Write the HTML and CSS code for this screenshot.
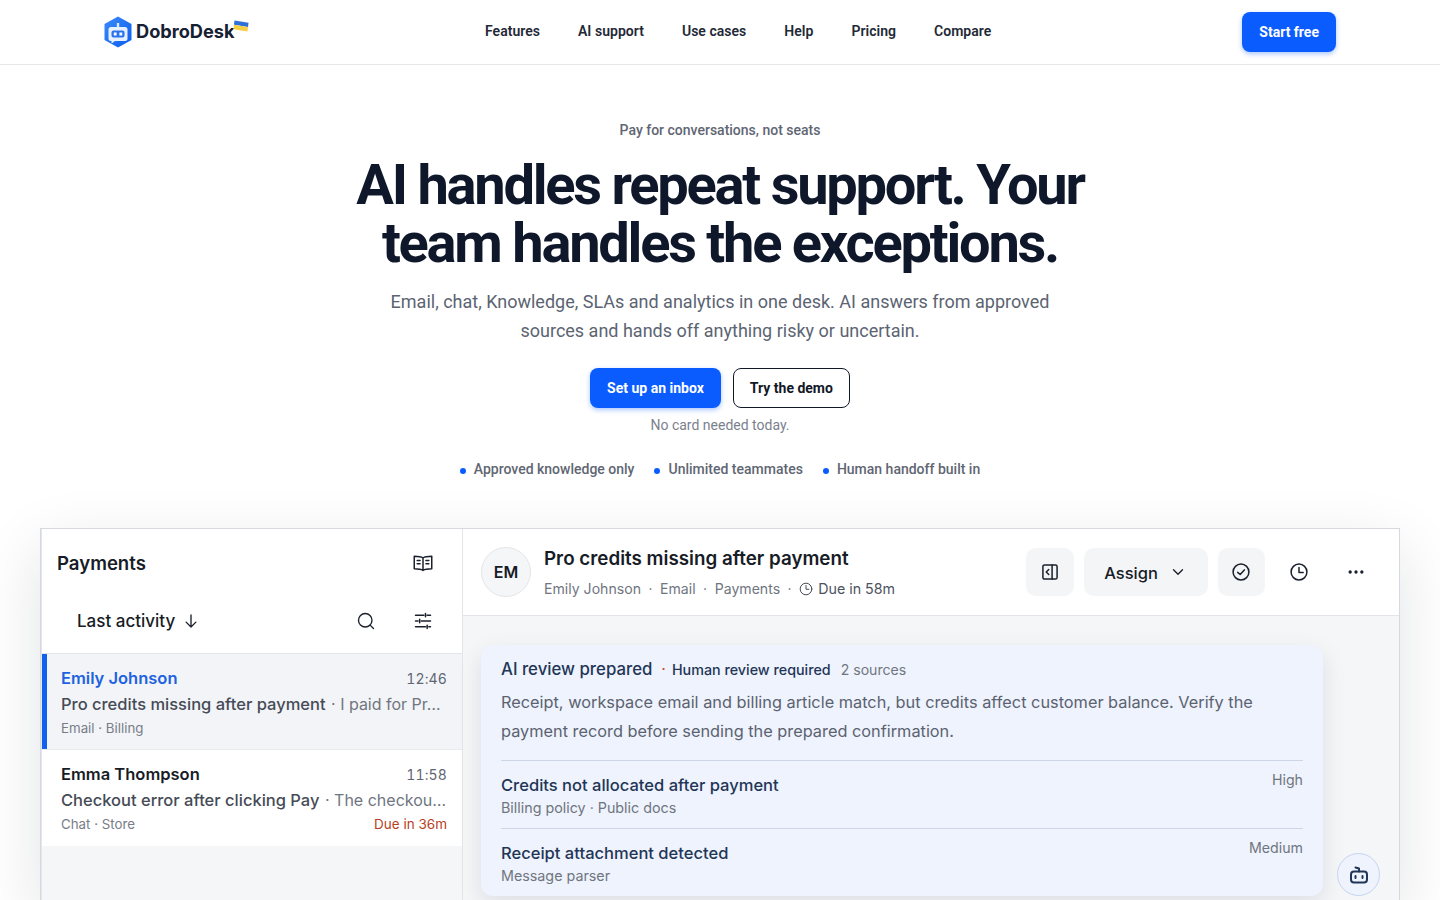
FILE: index.html
```html
<!DOCTYPE html>
<html lang="en">
<head>
  <meta charset="UTF-8" />
  <meta name="viewport" content="width=device-width, initial-scale=1.0"/>
  <title>DobroDesk</title>
  <link rel="stylesheet" href="styles.css">
</head>
<body>
  <header class="topbar">
    <div class="topbar-inner">
      <a class="logo" href="#">
        <svg class="logo-mark" width="28" height="32" viewBox="1 0 28 32">
          <defs>
            <linearGradient id="hex" x1="0" y1="0" x2="1" y2="1">
              <stop offset="0" stop-color="#3b8bf8"/>
              <stop offset="1" stop-color="#0b5cf0"/>
            </linearGradient>
          </defs>
          <path d="M15 0.5 L28.5 8 V24 L15 31.5 L1.5 24 V8 Z" fill="url(#hex)"/>
          <rect x="13.800" y="7" width="2.400" height="4.500" fill="#dbe8ff"/>
          <path d="M8 11 H22 A2.500 2.500 0 0 1 24.500 13.500 V22.500 A2.500 2.500 0 0 1 22 25 H12 L8.500 27.500 V25 H8 A2.500 2.500 0 0 1 5.500 22.500 V13.500 A2.500 2.500 0 0 1 8 11 Z" fill="#e6f0ff"/>
          <rect x="8.500" y="14.500" width="13" height="7" rx="2" fill="#2a74ee"/>
          <rect x="10.800" y="16.500" width="2.800" height="3" fill="#fff"/>
          <rect x="16.400" y="16.500" width="2.800" height="3" fill="#fff"/>
        </svg>
        <span class="logo-text">DobroDesk</span>
        <svg class="logo-flag" width="16" height="13" viewBox="0 0 16 13">
          <path d="M1.500 0.500 L15.500 2.800 L15 7 L1 4.800 Z" fill="#2f6fd8"/>
          <path d="M1 4.800 L15 7 L14.500 11.600 L0.500 9.300 Z" fill="#f7cf45"/>
        </svg>
      </a>
      <nav class="nav">
        <a href="#">Features</a>
        <a href="#">AI support</a>
        <a href="#">Use cases</a>
        <a href="#">Help</a>
        <a href="#">Pricing</a>
        <a href="#">Compare</a>
      </nav>
      <a class="btn btn-primary" href="#">Start free</a>
    </div>
  </header>

  <section class="hero">
    <p class="eyebrow">Pay for conversations, not seats</p>
    <h1>AI handles repeat support. Your team handles the exceptions.</h1>
    <p class="lead">Email, chat, Knowledge, SLAs and analytics in one desk. AI answers from approved sources and hands off anything risky or uncertain.</p>
    <div class="hero-actions">
      <a class="btn btn-primary" href="#">Set up an inbox</a>
      <a class="btn btn-outline" href="#">Try the demo</a>
    </div>
    <p class="note">No card needed today.</p>
    <ul class="points">
      <li>Approved knowledge only</li>
      <li>Unlimited teammates</li>
      <li>Human handoff built in</li>
    </ul>
  </section>

  <section class="demo">
    <aside class="side">
      <div class="side-head">
        <h2>Payments</h2>
        <svg class="ico" width="20" height="20" viewBox="0 0 24 24">
          <path d="M12 6C10 4.500 6.500 4 1.500 4V19c5 0 8.500 .5 10.500 2 2-1.500 5.500-2 10.500-2V4c-5 0-8.500 .5-10.500 2zM12 6V21M5 9h3.500M5 13h3.500M15.500 9H19M15.500 13H19"/>
        </svg>
      </div>
      <div class="side-sort">
        <span class="sort-label">Last activity</span>
        <svg class="ico sort-arrow" width="18" height="18" viewBox="0 0 24 24"><path d="M12 4v16M5.500 13.500L12 20l6.500-6.500"/></svg>
        <svg class="ico sort-search" width="18" height="18" viewBox="0 0 24 24"><circle cx="11" cy="11" r="9"/><path d="M17.500 17.500l4.500 4.500"/></svg>
        <svg class="ico" width="20" height="20" viewBox="0 0 24 24"><path d="M3 5h10M17 5h4M15 3v4M3 12h3M10 12h11M8 10v4M3 19h12M19 19h2M17 17v4"/></svg>
      </div>
      <div class="conv conv-active">
        <div class="conv-row">
          <span class="conv-name">Emily Johnson</span>
          <span class="conv-time">12:46</span>
        </div>
        <p class="conv-text"><b>Pro credits missing after payment</b> · I paid for Pr…</p>
        <div class="conv-row conv-meta">
          <span>Email · Billing</span>
        </div>
      </div>
      <div class="conv">
        <div class="conv-row">
          <span class="conv-name">Emma Thompson</span>
          <span class="conv-time">11:58</span>
        </div>
        <p class="conv-text"><b>Checkout error after clicking Pay</b> · The checkou…</p>
        <div class="conv-row conv-meta">
          <span>Chat · Store</span>
          <span class="conv-due">Due in 36m</span>
        </div>
      </div>
    </aside>

    <div class="main">
      <div class="main-head">
        <div class="avatar">EM</div>
        <div class="main-title">
          <h3>Pro credits missing after payment</h3>
          <p class="main-meta">
            <span>Emily Johnson</span><i>·</i><span>Email</span><i>·</i><span>Payments</span><i>·</i>
            <svg class="ico" width="14" height="14" viewBox="0 0 24 24"><circle cx="12" cy="12" r="10"/><path d="M12 6v6.500h5"/></svg>
            <span class="main-due">Due in 58m</span>
          </p>
        </div>
        <div class="tools">
          <button class="tool tool-fill">
            <svg class="ico" width="20" height="20" viewBox="0 0 24 24"><rect x="3.500" y="3.500" width="17" height="17" rx="2"/><path d="M14.500 3.500v17M10.500 9l-3 3 3 3"/></svg>
          </button>
          <button class="tool tool-fill tool-assign">Assign
            <svg class="ico" width="18" height="18" viewBox="0 0 24 24"><path d="M6 9l6 6 6-6"/></svg>
          </button>
          <button class="tool tool-fill">
            <svg class="ico" width="20" height="20" viewBox="0 0 24 24"><circle cx="12" cy="12" r="9.500"/><path d="M8 12.500l3 2.500 5-5.500"/></svg>
          </button>
          <button class="tool">
            <svg class="ico" width="20" height="20" viewBox="0 0 24 24"><circle cx="12" cy="12" r="9.500"/><path d="M12 6.500v6h5"/></svg>
          </button>
          <button class="tool">
            <svg width="20" height="20" viewBox="0 0 24 24" fill="#1a202c"><circle cx="5" cy="12" r="2"/><circle cx="12" cy="12" r="2"/><circle cx="19" cy="12" r="2"/></svg>
          </button>
        </div>
      </div>
      <div class="main-body">
        <div class="review">
          <div class="review-head">
            <strong>AI review prepared</strong>
            <span class="review-dot">·</span>
            <span class="review-tag">Human review required</span>
            <span class="review-count">2 sources</span>
          </div>
          <p class="review-text">Receipt, workspace email and billing article match, but credits affect customer balance. Verify the payment record before sending the prepared confirmation.</p>
          <div class="signal signal-first">
            <div>
              <div class="signal-title">Credits not allocated after payment</div>
              <div class="signal-sub">Billing policy · Public docs</div>
            </div>
            <span class="signal-level">High</span>
          </div>
          <div class="signal">
            <div>
              <div class="signal-title">Receipt attachment detected</div>
              <div class="signal-sub">Message parser</div>
            </div>
            <span class="signal-level">Medium</span>
          </div>
        </div>
        <button class="bot">
          <svg class="ico" width="24" height="24" viewBox="0 0 24 24"><rect x="4" y="8.500" width="16" height="11" rx="3"/><path d="M12 8.500V5.500L8.500 4.500M8.500 13v2M15.500 13v2"/></svg>
        </button>
      </div>
    </div>
  </section>
</body>
</html>
```

FILE: styles.css
```css
/* Page */
html, body {
  height: 900px;
  overflow: hidden;
}

body {
  margin: 0;
  font-family: Roboto, "Liberation Sans", sans-serif;
  background: #fff;
  color: #111827;
}

a {
  text-decoration: none;
  color: inherit;
}

.ico {
  fill: none;
  stroke: #1a202c;
  stroke-width: 1.8;
  stroke-linecap: round;
  stroke-linejoin: round;
  flex: none;
}

/* Top bar */
.topbar {
  height: 64px;
  border-bottom: 1px solid #e5e7eb;
}

.topbar-inner {
  max-width: 1232px;
  height: 64px;
  margin: 0 auto;
  display: flex;
  align-items: center;
  justify-content: space-between;
}

.logo {
  display: flex;
  align-items: center;
  width: 146px;
  height: 40px;
}

.logo-mark {
  flex: none;
}

.logo-text {
  margin: -2px 0 0 4px;
  font-family: Inter, sans-serif;
  font-size: 18.200px;
  font-weight: 700;
  color: #172033;
}

.logo-flag {
  flex: none;
  margin: -12px 0 0 -2px;
}

.nav {
  display: flex;
  gap: 38px;
  margin: -2px 16px 0 0;
  font-size: 14px;
  letter-spacing: 0.030px;
  font-weight: 600;
  color: #1f2937;
}

.btn {
  display: inline-flex;
  align-items: center;
  justify-content: center;
  height: 40px;
  padding: 0 17px;
  box-sizing: border-box;
  border-radius: 8px;
  font-size: 14px;
  font-weight: 700;
}

.btn-primary {
  background: #0a5cff;
  color: #fff;
  box-shadow: 0 2px 5px rgba(10, 92, 255, 0.35);
}

.btn-outline {
  padding: 0 16px;
  border: 1px solid #111827;
  color: #111827;
  background: #fff;
}

/* Hero */
.hero {
  display: flex;
  flex-direction: column;
  align-items: center;
  text-align: center;
  height: 463px;
  box-sizing: border-box;
  padding-top: 57px;
}

.eyebrow {
  margin: 0;
  font-size: 14px;
  line-height: 17px;
  font-weight: 500;
  color: #5f6673;
}

h1 {
  width: 760px;
  margin: 17px 0 0;
  font-size: 56px;
  line-height: 58px;
  font-weight: 700;
  letter-spacing: -2.240px;
  color: #0f172a;
}

.lead {
  width: 680px;
  margin: 15px 0 0;
  font-size: 18px;
  line-height: 29px;
  color: #5b6472;
}

.hero-actions {
  display: flex;
  gap: 12px;
  margin-top: 23px;
}

.note {
  margin: 9px 0 0;
  font-size: 14px;
  line-height: 17px;
  color: #7a818d;
}

.points {
  display: flex;
  gap: 20px;
  margin: 27px 0 0;
  padding: 0;
  list-style: none;
  font-size: 14px;
  line-height: 17px;
  font-weight: 500;
  color: #5f6673;
}

.points li {
  display: flex;
  align-items: center;
  gap: 8px;
}

.points li::before {
  content: "";
  width: 6px;
  height: 6px;
  margin-top: 2px;
  border-radius: 50%;
  background: #0a5cff;
}

/* Product demo */
.demo {
  display: flex;
  height: 371px;
  margin: 0 40px;
  font-family: Inter, sans-serif;
  border: 1px solid #d6d9de;
  border-bottom: 0;
  box-shadow: 0 20px 60px rgba(15, 23, 42, 0.12);
  background: #f5f6f8;
}

.side {
  width: 420px;
  flex: none;
  border-left: 1px solid #e3e5ea;
  border-right: 1px solid #e3e5ea;
  background: #f5f6f8;
}

.side-head {
  display: flex;
  align-items: center;
  justify-content: space-between;
  height: 68px;
  padding: 0 29px 0 15px;
  background: #fff;
}

.side-head h2 {
  margin: 0;
  font-size: 18.600px;
  font-weight: 600;
  color: #171c26;
}

.side-sort {
  display: flex;
  align-items: center;
  height: 57px;
  box-sizing: border-box;
  padding: 0 29px 8px 35px;
  background: #fff;
  border-bottom: 1px solid #e3e5ea;
}

.sort-label {
  font-size: 17px;
  font-weight: 500;
  color: #171c26;
}

.sort-arrow {
  margin-left: 7px;
}

.sort-search {
  margin: 0 38px 0 auto;
}

.conv {
  padding: 12px 15px 12px 19px;
  height: 96px;
  box-sizing: border-box;
  background: #fff;
}

.conv-active {
  background: #f3f4f7;
  box-shadow: inset 5px 0 0 #1260ee;
  border-bottom: 1px solid #e9ebef;
}

.conv-row {
  display: flex;
  justify-content: space-between;
  align-items: center;
}

.conv-name {
  font-size: 16.500px;
  line-height: 24px;
  font-weight: 600;
  color: #171c26;
}

.conv-active .conv-name {
  color: #1d62e0;
}

.conv-time {
  font-size: 14px;
  font-variant-numeric: tabular-nums;
  letter-spacing: 0.150px;
  color: #5f6673;
}

.conv-text {
  margin: 2px 0 0;
  font-size: 16px;
  line-height: 24px;
  color: #70767f;
  white-space: nowrap;
}

.conv-text b {
  margin-right: 1px;
  font-size: 16.500px;
  font-weight: 500;
  color: #454b56;
}

.conv-meta {
  margin-top: 3px;
  font-size: 13.300px;
  line-height: 18px;
  color: #777d87;
}

.conv-due {
  font-size: 13.500px;
  color: #b93e1c;
}

.main {
  flex: 1;
  min-width: 0;
  display: flex;
  flex-direction: column;
}

.main-head {
  display: flex;
  align-items: center;
  height: 86px;
  flex: none;
  padding: 0 18px;
  background: #fff;
  border-bottom: 1px solid #e3e5ea;
}

.avatar {
  width: 48px;
  height: 48px;
  flex: none;
  display: flex;
  align-items: center;
  justify-content: center;
  border: 1px solid #e3e5ea;
  border-radius: 50%;
  background: #f5f6f8;
  font-size: 16px;
  font-weight: 600;
  color: #171c26;
}

.main-title {
  margin-left: 13px;
}

.main-title h3 {
  margin: 0;
  font-size: 18.800px;
  line-height: 26px;
  font-weight: 600;
  color: #171c26;
}

.main-meta {
  display: flex;
  align-items: center;
  margin: 7px 0 0;
  font-size: 14.100px;
  line-height: 20px;
  color: #70767f;
}

.main-meta i {
  font-style: normal;
  margin: 0 7.500px;
}

.main-meta .ico {
  margin-right: 5px;
  stroke-width: 1.600;
  stroke: #3a404b;
}

.main-due {
  font-size: 14.250px;
  color: #4b525e;
}

.tools {
  display: flex;
  gap: 10px;
  margin-left: auto;
  margin-right: 1px;
}

.tool {
  width: 47.500px;
  height: 48px;
  display: flex;
  align-items: center;
  justify-content: center;
  border: 0;
  border-radius: 10px;
  background: none;
  padding: 0;
  font-family: inherit;
}

.tool-fill {
  background: #f4f5f7;
}

.tool-assign {
  width: 124px;
  gap: 11px;
  padding-top: 2px;
  font-size: 16.500px;
  font-weight: 500;
  color: #171c26;
}

.tool-assign .ico {
  margin-top: -2px;
}

.main-body {
  position: relative;
  flex: 1;
  padding: 29px 76px 0 18px;
}

.review {
  padding: 12px 20px 1px;
  border-radius: 12px;
  background: #eef3fd;
  box-shadow: 0 8px 24px rgba(15, 23, 42, 0.10);
}

.review-head {
  display: flex;
  align-items: center;
  height: 24px;
}

.review-head strong {
  font-size: 16.800px;
  font-weight: 500;
  color: #1f3657;
}

.review-dot {
  margin: 0 6px 0 9px;
  color: #c9492a;
}

.review-tag {
  font-size: 14.300px;
  font-weight: 500;
  color: #1f3657;
}

.review-count {
  margin-left: 10px;
  font-size: 14.100px;
  color: #70767f;
}

.review-text {
  margin: 7px 0 14px;
  font-size: 16.320px;
  line-height: 29px;
  color: #5b6270;
}

.signal {
  display: flex;
  justify-content: space-between;
  height: 67px;
  box-sizing: border-box;
  padding-top: 12px;
  border-top: 1px solid #ccd6e6;
}

.signal-first {
  height: 68px;
}

.signal-title {
  font-size: 16.550px;
  line-height: 24px;
  font-weight: 500;
  color: #1f3657;
}

.signal-sub {
  margin-top: 1px;
  font-size: 14.300px;
  line-height: 20px;
  color: #70767f;
}

.signal-level {
  font-size: 14.200px;
  line-height: 14px;
  color: #70767f;
}

/* Floating assistant button */
.bot {
  position: absolute;
  right: 19px;
  top: 237px;
  width: 43px;
  height: 43px;
  display: flex;
  align-items: center;
  justify-content: center;
  padding: 0;
  border: 1px solid #c5d5ee;
  border-radius: 50%;
  background: #eef3fd;
}

.bot .ico {
  stroke: #1f3657;
  stroke-width: 2;
}
```
